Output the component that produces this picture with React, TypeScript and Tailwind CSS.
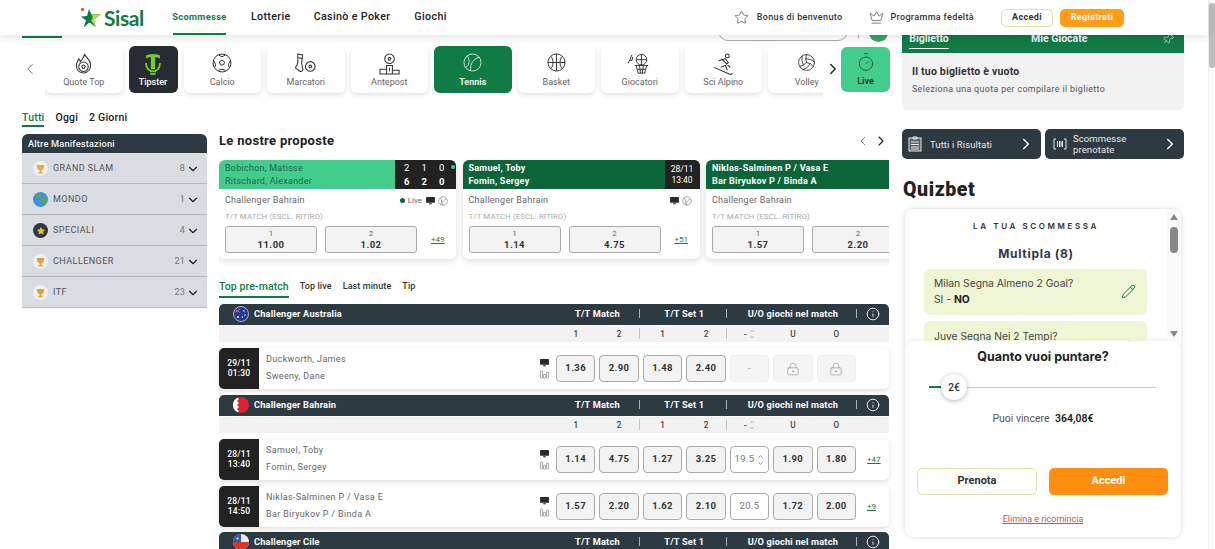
import { ChevronDown, ChevronLeft, ChevronRight, ChevronUp, Crown, Info, LockKeyhole, Pencil, Pin, Star, Timer, Volleyball } from "lucide-react";

const ink = "#333";

function Ball({ size = 20 }: { size?: number }) {
  return (
    <svg width={size} height={size} viewBox="0 0 20 20" fill="none" stroke={ink} strokeWidth="1">
      <circle cx="10" cy="10" r="9" />
      <path d="M10 7l2.600 1.900-1 3H8.400l-1-3z" />
      <path d="M6.500 2l3.500 1.800L13.500 2M1.800 8l1.800 3.400-.6 2.800M18.200 8l-1.800 3.400.6 2.800M6.500 17.300l3.500-1 3.500 1" />
    </svg>
  );
}

function QuoteIcon() {
  return (
    <svg width="19" height="21" viewBox="0 0 20 22" fill="none" stroke={ink} strokeWidth="1.100">
      <path d="M11 1c1 3 6 6 6.500 11 .4 5-3 9-7.500 9s-8-3.500-7.500-8.500C3 9 4.500 8 5 6c1 1 1.500 2 1.500 3C8.500 7 11 4.500 11 1z" />
      <circle cx="10" cy="14.500" r="5" />
      <path d="M10 12.500l1.800 1.300-.7 2.100H8.900l-.7-2.100z" />
    </svg>
  );
}

function TipsterIcon() {
  return (
    <svg width="16" height="22" viewBox="0 0 15 20" fill="none">
      <path d="M1 2c2-1.500 11-1.500 13 0v3c-1-1-3-1.300-4.500-1.300V15H5.500V3.700C4 3.700 2 4 1 5z" fill="#78cc2a" />
      <path d="M1 9c0 4.500 2.500 8 6.500 8s6.500-3.500 6.500-8M5 18.800c1.500 .8 3.500 .8 5 0" stroke="#78cc2a" strokeWidth="1.700" />
    </svg>
  );
}

function BootIcon() {
  return (
    <svg width="23" height="23" viewBox="0 0 24 24" fill="none" stroke={ink} strokeWidth="1.100">
      <path d="M4 1l5 1-1 9 1 5c1 2-1 4-3 3l-4-3c-1-1 0-2 1-3l1-3z" />
      <path d="M4.500 5l4 .8" />
      <circle cx="17" cy="14" r="5" />
      <path d="M17 12.500l1.500 1-.6 1.800h-1.800l-.6-1.800z" />
    </svg>
  );
}

function PodiumIcon() {
  return (
    <svg width="23" height="23" viewBox="0 0 24 24" fill="none" stroke={ink} strokeWidth="1.100">
      <circle cx="12" cy="6" r="5" />
      <path d="M12 4.500l1.500 1-.6 1.800h-1.800l-.6-1.800zM9 13h6v9H9zM2 17h7v5H2zM15 18h7v4h-7zM12 15.500v3.500" />
    </svg>
  );
}

function TennisIcon() {
  return (
    <svg width="19" height="19" viewBox="0 0 20 20" fill="none" stroke="#cfe9da" strokeWidth="1">
      <circle cx="10" cy="10" r="9" />
      <path d="M4 3.200C8 6 7 14 2 15.500M17.500 4.500C12 5 7 11 8 18.800" />
    </svg>
  );
}

function BasketIcon() {
  return (
    <svg width="19" height="19" viewBox="0 0 20 20" fill="none" stroke={ink} strokeWidth="1">
      <circle cx="10" cy="10" r="9" />
      <path d="M10 1v18M1 10h18M4 3.500c3 3 3 10 0 13M16 3.500c-3 3-3 10 0 13" />
    </svg>
  );
}

function HoopIcon() {
  return (
    <svg width="25" height="23" viewBox="0 0 26 24" fill="none" stroke={ink} strokeWidth="1">
      <circle cx="15" cy="7" r="5.500" />
      <path d="M15 1.500v11M9.500 7h11M8 13h14M9.500 13l2 8h7l2-8M11 17h8M13 13l1 8M17 13l-1 8" />
      <path d="M1 11l2-4 2-5M3 7l2 1 1-4" />
    </svg>
  );
}

function SkierIcon() {
  return (
    <svg width="21" height="23" viewBox="0 0 22 24" fill="none" stroke={ink} strokeWidth="1.100">
      <circle cx="15" cy="3" r="2" />
      <path d="M6 8l7-2 3 4-3 3 2 5M13 13l-5 2M9 6l9 9M1 15l16 7c2 .8 3 0 3-1" />
    </svg>
  );
}

function TvIcon() {
  return (
    <svg width="9" height="8" viewBox="0 0 10 9" fill="#2a2a2a" className="shrink-0">
      <rect x="0" y="0" width="10" height="6.500" rx="0.600" />
      <rect x="3.500" y="7" width="3" height="1.200" />
    </svg>
  );
}

function StatsIcon() {
  return (
    <svg width="9" height="9" viewBox="0 0 10 10" fill="none" stroke="#777" strokeWidth="0.700" className="shrink-0">
      <rect x="0.500" y="1" width="2.400" height="8" rx="0.600" />
      <rect x="3.800" y="5" width="2.400" height="4" rx="0.600" />
      <rect x="7.100" y="2.500" width="2.400" height="6.500" rx="0.600" />
    </svg>
  );
}

function MiniBall() {
  return (
    <svg width="10" height="10" viewBox="0 0 10 10" fill="none" stroke="#777" strokeWidth="0.600">
      <circle cx="5" cy="5" r="4.300" />
      <path d="M2 2c2 2 2 4 1 6.500M8.500 3C6 3.500 4 6 4.500 9.200" />
    </svg>
  );
}

function TrophyBadge({ color }: { color: string }) {
  return (
    <span className="flex h-[15px] w-[15px] items-center justify-center rounded-full bg-[#eef0f2]">
      <svg width="9" height="10" viewBox="0 0 10 11" fill={color}>
        <path d="M1 1h8v1.500C9 5 7.500 6.500 6 7v2h1.500v1.500h-5V9H4V7C2.500 6.500 1 5 1 2.500z" />
      </svg>
    </span>
  );
}

function GlobeBadge() {
  return (
    <svg width="15" height="15" viewBox="0 0 16 16">
      <circle cx="8" cy="8" r="8" fill="#3d94d6" />
      <path d="M4 2c2-1 4 0 5 1L7 6 4 7 2 5zM9 7l5-1 1 3-3 5-2-2z" fill="#58a65c" />
    </svg>
  );
}

function StarBadge() {
  return (
    <span className="flex h-[15px] w-[15px] items-center justify-center rounded-full bg-[#2d3a42]">
      <Star size={8} fill="#f2c21b" stroke="#f2c21b" />
    </span>
  );
}

function AustraliaFlag() {
  return (
    <svg width="16" height="16" viewBox="0 0 16 16">
      <circle cx="8" cy="8" r="7.500" fill="#27398f" stroke="#fff" strokeWidth="0.600" />
      <path d="M2 3.500l5 3M7 3l-5 3.500" stroke="#e05a6a" strokeWidth="1" />
      <circle cx="11" cy="5" r="0.700" fill="#fff" />
      <circle cx="12" cy="9" r="0.700" fill="#fff" />
      <circle cx="9.500" cy="11" r="0.700" fill="#fff" />
      <circle cx="5" cy="11" r="1" fill="#fff" />
    </svg>
  );
}

function BahrainFlag() {
  return (
    <svg width="16" height="16" viewBox="0 0 16 16">
      <circle cx="8" cy="8" r="8" fill="#d9262e" />
      <path d="M4.500.8A8 8 0 0 0 4.500 15.200L6 14l-2-2 2-2-2-2 2-2-2-2 2-2z" fill="#fff" />
    </svg>
  );
}

function ChileFlag() {
  return (
    <svg width="16" height="16" viewBox="0 0 16 16">
      <circle cx="8" cy="8" r="8" fill="#e9edf2" />
      <path d="M0 8h16a8 8 0 0 1-16 0z" fill="#d9372c" />
      <path d="M8 0v8H0a8 8 0 0 1 8-8z" fill="#2f55a4" />
      <circle cx="4.500" cy="4.500" r="1.100" fill="#fff" />
    </svg>
  );
}

function Logo() {
  return (
    <div className="flex items-center">
      <svg width="22" height="22" viewBox="0 0 22 22">
        <path d="M9 2l2.500 5.500 9.500-.5-7 5.500 1.500 7.500-6-4.500-6 5 2.500-7L1 9.500l6-.5z" fill="#0f7b45" />
        <path d="M11.500 7.500L21 7l-7 5.500 1.500 7.500-4.500-6.500 2-3z" fill="#b7d84b" />
        <circle cx="2.500" cy="2.500" r="1.600" fill="#e0352b" />
      </svg>
      <span className="ml-[2px] text-[21px] leading-none font-bold tracking-[-0.4px] text-[#0f7b45] [font-family:Lato,sans-serif]">Sisal</span>
    </div>
  );
}

function Header() {
  return (
    <header className="relative z-20 flex h-[35px] items-center bg-white pl-[80px] shadow-[0_2px_8px_rgba(0,0,0,0.12)]">
      <Logo />
      <nav className="ml-[29px] flex h-full items-center text-[10.700px] font-medium tracking-[0.35px] text-[#222]">
        <span className="flex h-full w-[53px] items-center justify-center border-b-2 border-[#0f7b45] text-[9.200px] font-bold tracking-[0.4px] text-[#0f7b45]">Scommesse</span>
        <span className="ml-[25px]">Lotterie</span>
        <span className="ml-[23px]">Casinò e Poker</span>
        <span className="ml-[24px]">Giochi</span>
      </nav>
      <div className="ml-auto flex items-center pr-[84px] text-[9px] font-medium tracking-[0.35px] text-[#333]">
        <Star size={15} strokeWidth={1} />
        <span className="ml-[8px]">Bonus di benvenuto</span>
        <Crown size={15} strokeWidth={1} className="ml-[27px]" />
        <span className="ml-[6px]">Programma fedeltà</span>
        <span className="ml-[27px] flex h-[18px] w-[52px] items-center justify-center rounded-[5px] border border-[#dfe3a8] font-bold text-[#333]">Accedi</span>
        <span className="ml-[7px] flex h-[18px] w-[64px] items-center justify-center rounded-[5px] bg-[#ff9d1b] font-bold text-white">Registrati</span>
      </div>
    </header>
  );
}

type Tile = { label: string; icon: React.ReactNode; tone?: "dark" | "green" };

const tiles: Tile[] = [
  { label: "Quote Top", icon: <QuoteIcon /> },
  { label: "Tipster", icon: <TipsterIcon />, tone: "dark" },
  { label: "Calcio", icon: <Ball /> },
  { label: "Marcatori", icon: <BootIcon /> },
  { label: "Antepost", icon: <PodiumIcon /> },
  { label: "Tennis", icon: <TennisIcon />, tone: "green" },
  { label: "Basket", icon: <BasketIcon /> },
  { label: "Giocatori", icon: <HoopIcon /> },
  { label: "Sci Alpino", icon: <SkierIcon /> },
  { label: "Volley", icon: <Volleyball size={19} strokeWidth={1.100} color={ink} /> },
];

function TileBox({ tile }: { tile: Tile }) {
  const base = "flex h-[47px] shrink-0 flex-col items-center justify-between rounded-[6px] pt-[7px] pb-[5px] text-[9px] leading-[11px]";
  if (tile.tone === "dark") {
    return (
      <div className={`${base} w-[49px] bg-[#262c31] pt-[6px] font-medium text-white`}>
        {tile.icon}
        <span>{tile.label}</span>
      </div>
    );
  }
  if (tile.tone === "green") {
    return (
      <div className={`${base} w-[77.500px] bg-[#0f7b45] font-bold text-[#e6f3ec]`}>
        {tile.icon}
        <span>{tile.label}</span>
      </div>
    );
  }
  return (
    <div className={`${base} w-[77.500px] bg-white pt-[6px] text-[#666] shadow-[0_2px_5px_rgba(0,0,0,0.12)]`}>
      {tile.icon}
      <span>{tile.label}</span>
    </div>
  );
}

function CategoryStrip() {
  return (
    <div className="flex h-[58px] items-start pl-[21px]">
      <ChevronLeft size={18} strokeWidth={1.200} color="#666" className="mt-[14px] mr-[6px] shrink-0" />
      <div className="flex h-[58px] w-[778px] shrink-0 gap-[6px] overflow-hidden">
        {tiles.map((t) => (
          <TileBox key={t.label} tile={t} />
        ))}
      </div>
      <ChevronRight size={18} strokeWidth={1.800} color="#222" className="mt-[14px] ml-[1px] shrink-0" />
      <div className="mt-[1px] -ml-[1px] flex h-[45px] w-[49px] shrink-0 flex-col items-center justify-between rounded-[6px] bg-[#43cd8d] pt-[5px] pb-[5px] text-[9px] leading-[11px] font-bold text-[#1f3b2f]">
        <Timer size={20} strokeWidth={1} color="#23493a" />
        <span>Live</span>
      </div>
    </div>
  );
}

const leagues = [
  { name: "GRAND SLAM", count: 8, icon: <TrophyBadge color="#eda93a" /> },
  { name: "MONDO", count: 1, icon: <GlobeBadge /> },
  { name: "SPECIALI", count: 4, icon: <StarBadge /> },
  { name: "CHALLENGER", count: 21, icon: <TrophyBadge color="#e3a13d" /> },
  { name: "ITF", count: 23, icon: <TrophyBadge color="#e3a13d" /> },
];

function Sidebar() {
  return (
    <aside className="w-[185px] shrink-0 pt-[1px]">
      <div className="flex h-[24px] items-start gap-[11px] text-[10.500px] leading-[15px] font-medium tracking-[0.2px] text-[#222]">
        <span className="h-[17px] border-b-2 border-[#0f7b45] text-[#0f7b45]">Tutti</span>
        <span>Oggi</span>
        <span>2 Giorni</span>
      </div>
      <div className="flex h-[19px] items-center rounded-t-[6px] bg-[#2d3a42] pl-[6px] text-[9.200px] font-medium tracking-[0.2px] text-[#f1f1f1]">Altre Manifestazioni</div>
      {leagues.map((l) => (
        <div key={l.name} className="flex h-[31px] items-center border-b border-[#b4b8be] bg-[#d9dce1] pt-[1px] pr-[7px] pl-[11px] text-[9px] tracking-[0.45px] text-[#555]">
          <span className="flex w-[15px] justify-center">{l.icon}</span>
          <span className="ml-[5px]">{l.name}</span>
          <span className="ml-auto tracking-[0.2px] text-[#777]">{l.count}</span>
          <ChevronDown size={14} strokeWidth={2} color="#222" className="ml-[1px]" />
        </div>
      ))}
    </aside>
  );
}

type Featured = {
  one: string;
  two: string;
  odds: [string, string];
  more?: string;
  live?: boolean;
  time?: [string, string];
};

const featured: Featured[] = [
  { one: "Bobichon, Matisse", two: "Ritschard, Alexander", odds: ["11.00", "1.02"], more: "+49", live: true },
  { one: "Samuel, Toby", two: "Fomin, Sergey", odds: ["1.14", "4.75"], more: "+51", time: ["28/11", "13:40"] },
  { one: "Niklas-Salminen P / Vasa E", two: "Bar Biryukov P / Binda A", odds: ["1.57", "2.20"] },
];

function FeaturedCard({ card }: { card: Featured }) {
  return (
    <div className="h-[99px] w-[237px] shrink-0 overflow-hidden rounded-[6px] bg-white shadow-[0_2px_6px_rgba(0,0,0,0.14)]">
      <div className={`flex h-[29px] ${card.live ? "bg-[#43cd8d] text-[#23634a]" : "bg-[#0a6538] font-bold text-white"}`}>
        <div className="flex flex-1 flex-col justify-center pl-[6px] text-[9px] leading-[13px] tracking-[0.25px]">
          <span>{card.one}</span>
          <span>{card.two}</span>
        </div>
        {card.live && (
          <div className="grid w-[61px] grid-cols-[17.500px_17.500px_17.500px_1fr] items-center bg-[#222] pl-[3px] text-center text-[9.500px] leading-[13px] font-bold text-white">
            <span className="font-normal">2</span>
            <span className="font-normal">1</span>
            <span className="font-normal">0</span>
            <span className="h-[4px] w-[4px] rounded-full bg-[#43cd8d]" />
            <span>6</span>
            <span>2</span>
            <span>0</span>
          </div>
        )}
        {card.time && (
          <div className="flex w-[35px] flex-col items-center justify-center bg-[#222] text-[8.500px] leading-[11px] font-normal text-white">
            <span>{card.time[0]}</span>
            <span>{card.time[1]}</span>
          </div>
        )}
      </div>
      <div className="flex h-[23px] items-center justify-between pr-[8px] pl-[6px] text-[9px] tracking-[0.25px] text-[#666]">
        <span>Challenger Bahrain</span>
        <span className="flex items-center gap-[3px] text-[8px] tracking-normal">
          {card.live && (
            <>
              <span className="h-[4.500px] w-[4.500px] rounded-full bg-[#0a6538]" />
              <span className="mr-[1px]">Live</span>
            </>
          )}
          {!card.one.startsWith("Niklas") && (
            <>
              <TvIcon />
              <MiniBall />
            </>
          )}
        </span>
      </div>
      <div className="pl-[6px] text-[7.900px] leading-[10px] tracking-[0.1px] text-[#aaa]">T/T MATCH (ESCL. RITIRO)</div>
      <div className="mt-[4px] flex items-center pl-[6px]">
        {card.odds.map((o, i) => (
          <div key={o} className={`flex h-[27px] w-[92px] shrink-0 flex-col items-center justify-center rounded-[3px] border border-[#aaa] bg-[#f3f3f3] ${i === 1 ? "ml-[8px]" : ""}`}>
            <span className="text-[8px] leading-[11px] text-[#666]">{i + 1}</span>
            <span className="text-[9.500px] leading-[12px] font-bold tracking-[0.5px] text-[#333]">{o}</span>
          </div>
        ))}
        {card.more && <span className="ml-[14px] text-[8px] text-[#0f7b45] underline">{card.more}</span>}
      </div>
    </div>
  );
}

function Proposals() {
  return (
    <section>
      <div className="flex h-[29px] items-start justify-between">
        <h2 className="text-[13px] leading-[20px] font-bold tracking-[0.3px] text-[#222]">Le nostre proposte</h2>
        <div className="flex gap-[2px]">
          <ChevronLeft size={16} strokeWidth={1.200} color="#666" className="mt-[2px]" />
          <ChevronRight size={16} strokeWidth={1.700} color="#222" className="mt-[2px]" />
        </div>
      </div>
      <div className="flex h-[119px] gap-[6.500px] overflow-hidden">
        {featured.map((c) => (
          <FeaturedCard key={c.one} card={c} />
        ))}
      </div>
    </section>
  );
}

function GroupHeader({ name, flag, sub = true }: { name: string; flag: React.ReactNode; sub?: boolean }) {
  return (
    <>
      <div className="flex h-[21px] shrink-0 items-center rounded-t-[5px] bg-[#2d3a42] pb-[1px] pl-[14px] text-[9.200px] font-bold tracking-[0.2px] text-white">
        <span className="flex w-[16px] justify-center">{flag}</span>
        <span className="ml-[5px] w-[302px]">{name}</span>
        <div className="grid w-[300px] grid-cols-7 gap-[4px]">
          <div className="col-span-2 flex items-center">
            <span className="flex-1 text-center">T/T Match</span>
            <span className="-mr-[1px] h-[9px] w-px bg-[#aab2b7]" />
          </div>
          <div className="col-span-2 flex items-center">
            <span className="flex-1 text-center">T/T Set 1</span>
            <span className="-mr-[1px] h-[9px] w-px bg-[#aab2b7]" />
          </div>
          <div className="col-span-3 flex items-center">
            <span className="flex-1 text-center">U/O giochi nel match</span>
            <span className="-mr-[1px] h-[9px] w-px bg-[#aab2b7]" />
          </div>
        </div>
        <Info size={14} strokeWidth={1.500} className="ml-[10px]" />
      </div>
      {sub && (
        <div className="mt-px flex h-[16px] shrink-0 items-center bg-[#f2f2f2] pl-[337px] text-[8.200px] font-medium text-[#444]">
          <div className="grid w-[300px] grid-cols-7 gap-[4px] text-center">
            <span>1</span>
            <div className="flex items-center">
              <span className="flex-1">2</span>
              <span className="-mr-[1px] h-[11px] w-px bg-[#c4c4c4]" />
            </div>
            <span>1</span>
            <div className="flex items-center">
              <span className="flex-1">2</span>
              <span className="-mr-[1px] h-[11px] w-px bg-[#c4c4c4]" />
            </div>
            <div className="flex items-center justify-center gap-[2px]">
              <span>-</span>
              <span className="flex flex-col items-center">
                <ChevronUp size={6} strokeWidth={1.500} />
                <ChevronDown size={6} strokeWidth={1.500} />
              </span>
            </div>
            <span>U</span>
            <span>O</span>
          </div>
        </div>
      )}
    </>
  );
}

type Match = {
  date: string;
  time: string;
  one: string;
  two: string;
  odds: string[];
  line: string;
  spin?: boolean;
  locked?: boolean;
  more?: string;
};

function OddBox({ value, off }: { value: string; off?: boolean }) {
  return (
    <span className={`flex h-[27px] items-center justify-center rounded-[4px] border text-[9.500px] font-bold tracking-[0.4px] ${off ? "border-[#eee] bg-[#f5f5f5] text-[#bbb]" : "border-[#aaa] bg-[#f3f3f3] text-[#333]"}`}>
      {value}
    </span>
  );
}

function MatchRow({ m }: { m: Match }) {
  return (
    <div className="flex h-[41px] shrink-0 rounded-[5px] bg-white shadow-[0_2px_5px_rgba(0,0,0,0.13)]">
      <div className="flex w-[40px] flex-col items-center justify-center rounded-l-[5px] bg-[#222] pb-[2px] text-[8.500px] leading-[10px] font-medium tracking-[0.2px] text-white">
        <span>{m.date}</span>
        <span>{m.time}</span>
      </div>
      <div className="flex w-[273px] flex-col justify-center gap-[6px] pb-[2px] pl-[7px] text-[9px] leading-[11px] tracking-[0.35px] text-[#666]">
        <span>{m.one}</span>
        <span>{m.two}</span>
      </div>
      <div className="flex w-[24px] flex-col items-center justify-center gap-[3px]">
        <TvIcon />
        <StatsIcon />
      </div>
      <div className="grid w-[300px] grid-cols-7 items-center gap-[4px]">
        {m.odds.slice(0, 4).map((o, i) => (
          <OddBox key={i} value={o} />
        ))}
        {m.locked ? (
          <>
            <OddBox value="-" off />
            <span className="flex h-[27px] items-center justify-center rounded-[4px] border border-[#eee] bg-[#f5f5f5]">
              <LockKeyhole size={14} strokeWidth={1} color="#888" />
            </span>
            <span className="flex h-[27px] items-center justify-center rounded-[4px] border border-[#eee] bg-[#f5f5f5]">
              <LockKeyhole size={14} strokeWidth={1} color="#888" />
            </span>
          </>
        ) : (
          <>
            <span className="flex h-[27px] items-center justify-center gap-[3px] rounded-[4px] border border-[#aaa] bg-white text-[9.500px] tracking-[0.3px] text-[#777]">
              {m.line}
              {m.spin && (
                <span className="flex flex-col items-center">
                  <ChevronUp size={7} strokeWidth={1.800} color="#333" />
                  <ChevronDown size={7} strokeWidth={1.800} color="#333" />
                </span>
              )}
            </span>
            <OddBox value={m.odds[4]} />
            <OddBox value={m.odds[5]} />
          </>
        )}
      </div>
      {m.more && <span className="ml-[11px] self-center text-[8px] text-[#0f7b45] underline">{m.more}</span>}
    </div>
  );
}

function Listing() {
  return (
    <section className="flex flex-col">
      <div className="flex h-[20px] shrink-0 items-start gap-[11px] text-[9px] leading-[15px] font-medium tracking-[0.1px] text-[#333]">
        <span className="h-[19px] border-b-2 border-[#0f7b45] text-[10.500px] leading-[15px] tracking-[0.1px] text-[#0f7b45]">Top pre-match</span>
        <span>Top live</span>
        <span>Last minute</span>
        <span>Tip</span>
      </div>
      <div className="mt-[5px]">
        <GroupHeader name="Challenger Australia" flag={<AustraliaFlag />} />
      </div>
      <div className="mt-[6px]">
        <MatchRow m={{ date: "29/11", time: "01:30", one: "Duckworth, James", two: "Sweeny, Dane", odds: ["1.36", "2.90", "1.48", "2.40"], line: "-", locked: true }} />
      </div>
      <div className="mt-[6px]">
        <GroupHeader name="Challenger Bahrain" flag={<BahrainFlag />} />
      </div>
      <div className="mt-[6px]">
        <MatchRow m={{ date: "28/11", time: "13:40", one: "Samuel, Toby", two: "Fomin, Sergey", odds: ["1.14", "4.75", "1.27", "3.25", "1.90", "1.80"], line: "19.5", spin: true, more: "+47" }} />
      </div>
      <div className="mt-[6px]">
        <MatchRow m={{ date: "28/11", time: "14:50", one: "Niklas-Salminen P / Vasa E", two: "Bar Biryukov P / Binda A", odds: ["1.57", "2.20", "1.62", "2.10", "1.72", "2.00"], line: "20.5", more: "+9" }} />
      </div>
      <div className="mt-[5px]">
        <GroupHeader name="Challenger Cile" flag={<ChileFlag />} sub={false} />
      </div>
    </section>
  );
}

function Ticket() {
  return (
    <div>
      <div className="flex h-[18px] items-start bg-[#0f7b45] text-[10.500px] font-bold text-[#eef7f1]">
        <span className="ml-[7px] h-[14px] w-[40px] border-b border-white text-center leading-[7px]">Biglietto</span>
        <span className="ml-[82px] leading-[7px]">Mie Giocate</span>
        <Pin size={12} strokeWidth={1.200} className="mt-[-2px] mr-[10px] ml-auto rotate-45 text-white" />
      </div>
      <div className="h-[57px] rounded-b-[6px] bg-[#f2f2f2] pt-[12px] pl-[10px]">
        <p className="text-[10.500px] leading-[14px] font-bold tracking-[0.2px] text-[#333]">Il tuo biglietto è vuoto</p>
        <p className="mt-[5px] text-[8.900px] leading-[11px] tracking-[0.35px] text-[#555]">Seleziona una quota per compilare il biglietto</p>
      </div>
    </div>
  );
}

function QuickLinks() {
  return (
    <div className="mt-[19px] flex gap-[4px] text-[9.500px] leading-[11px] tracking-[0.1px] text-[#e8e8e8]">
      <div className="flex h-[30px] w-[139px] items-center rounded-[5px] bg-[#2d3a42] pr-[6px] pl-[6px]">
        <svg width="14" height="16" viewBox="0 0 14 16" fill="none" stroke="#e8e8e8" strokeWidth="1">
          <rect x="1" y="2" width="12" height="13" fill="#555f66" />
          <path d="M5 1h4v2H5zM3 6h8M3 8.500h8M3 11h8M3 13h8" />
        </svg>
        <span className="ml-[8px]">Tutti i Risultati</span>
        <ChevronRight size={18} strokeWidth={2} color="#fff" className="ml-auto" />
      </div>
      <div className="flex h-[30px] w-[139px] items-center rounded-[5px] bg-[#2d3a42] pr-[5px] pl-[8px]">
        <svg width="14" height="12" viewBox="0 0 14 12" fill="none" stroke="#e8e8e8" strokeWidth="1">
          <path d="M3 1H1v10h2M11 1h2v10h-2M4.500 3v6M6.500 3v6M8 3v6M9.500 3v6" />
        </svg>
        <span className="ml-[6px]">
          Scommesse
          <br />
          prenotate
        </span>
        <ChevronRight size={18} strokeWidth={2} color="#fff" className="ml-auto" />
      </div>
    </div>
  );
}

function Quizbet() {
  return (
    <section className="mt-[16px]">
      <h2 className="ml-[1px] h-[34px] text-[19.500px] leading-[30px] font-black tracking-[0.6px] text-[#222]">Quizbet</h2>
      <div className="ml-[3px] h-[328px] w-[276px] overflow-hidden rounded-[8px] bg-white shadow-[0_0_5px_rgba(0,0,0,0.16)]">
        <div className="flex h-[132px] overflow-hidden">
          <div className="w-[262px] shrink-0 pt-[11px] text-center [font-family:Inter,sans-serif]">
            <p className="text-[8px] leading-[12px] font-semibold tracking-[2.600px] text-[#333]">LA TUA SCOMMESSA</p>
            <p className="mt-[14px] text-[12px] leading-[16px] font-bold tracking-[0.7px] text-[#2d3a42]">Multipla (8)</p>
            <div className="mt-[7px] ml-[19px] flex h-[46px] w-[223px] items-center justify-between rounded-[6px] bg-[#eff6d5] pr-[11px] pb-[2px] pl-[10px] text-left text-[10.300px] leading-[16px] text-[#444]">
              <div>
                <p>Milan Segna Almeno 2 Goal?</p>
                <p>
                  SI - <b className="text-[#222]">NO</b>
                </p>
              </div>
              <Pencil size={15} strokeWidth={1.400} color="#0a6538" />
            </div>
            <div className="mt-[6px] ml-[19px] flex h-[46px] w-[223px] justify-between rounded-[6px] bg-[#eff6d5] pt-[7px] pr-[12px] pl-[10px] text-left text-[10.300px] leading-[16px] text-[#444]">
              <p>Juve Segna Nei 2 Tempi?</p>
              <ChevronUp size={13} strokeWidth={1.400} color="#0a6538" className="mt-[8px]" />
            </div>
          </div>
          <div className="flex w-[14px] flex-col items-center bg-[#fafafa] pt-[5px]">
            <span className="h-0 w-0 border-x-[4.500px] border-b-[6px] border-x-transparent border-b-[#888]" />
            <span className="mt-[7px] h-[26px] w-[8px] rounded-full bg-[#888]" />
            <span className="mt-[78px] h-0 w-0 border-x-[4.500px] border-t-[6px] border-x-transparent border-t-[#888]" />
          </div>
        </div>
        <div className="h-[196px] rounded-t-[10px] bg-white pt-[8px] shadow-[0_-2px_5px_rgba(0,0,0,0.06)]">
          <p className="text-center text-[12.500px] leading-[16px] font-bold text-[#222] [font-family:Inter,sans-serif]">Quanto vuoi puntare?</p>
          <div className="relative mt-[9px] ml-[24px] flex h-[26px] w-[227px] items-center">
            <span className="h-[1.500px] w-[12px] bg-[#0f7b45]" />
            <span className="h-px flex-1 bg-[#ccc]" />
            <span className="absolute top-0 left-[12px] flex h-[26px] w-[26px] items-center justify-center rounded-full bg-white text-[10px] font-medium text-[#333] shadow-[0_1px_4px_rgba(0,0,0,0.3)]">2€</span>
          </div>
          <p className="mt-[11px] text-center text-[10.500px] leading-[16px] text-[#555]">
            Puoi vincere <b className="ml-[3px] font-semibold text-[#222]">364,08€</b>
          </p>
          <div className="mt-[41px] ml-[12px] flex gap-[12px] text-[11px] font-bold">
            <span className="flex h-[27px] w-[120px] items-center justify-center rounded-[5px] border border-[#dfe3a8] bg-white text-[#333]">Prenota</span>
            <span className="flex h-[27px] w-[119px] items-center justify-center rounded-[5px] bg-[#ff8d10] text-white">Accedi</span>
          </div>
          <p className="mt-[18px] text-center text-[9px] leading-[12px] text-[#b85a5a] underline">Elimina e ricomincia</p>
        </div>
      </div>
    </section>
  );
}

export default function App() {
  return (
    <div className="flex h-[549px] w-[1215px] overflow-hidden bg-white text-[#222] [font-family:Roboto,'Liberation_Sans',sans-serif]">
      <div className="w-[1208px] shrink-0">
        <Header />
        <div className="flex">
          <div className="w-[902px] shrink-0">
            <div className="flex h-[11px] items-start overflow-hidden">
              <span className="mt-[1px] ml-[22px] h-[1.500px] w-[40px] bg-[#0f7b45]" />
              <span className="-mt-[14px] ml-[656px] h-[20px] w-[130px] rounded-full border border-[#aaa]" />
              <span className="ml-[10px] h-[3px] w-px bg-[#aaa]" />
              <span className="-mt-[12px] ml-[10px] h-[19px] w-[19px] rounded-full bg-[#3ea06a]" />
            </div>
            <CategoryStrip />
            <div className="flex gap-[12px] pt-[5px] pl-[22px]">
              <Sidebar />
              <div className="mt-[22px] w-[670px] shrink-0">
                <Proposals />
                <Listing />
              </div>
            </div>
          </div>
          <div className="w-[282px] shrink-0">
            <Ticket />
            <QuickLinks />
            <Quizbet />
          </div>
        </div>
      </div>
      <div className="w-[7px] shrink-0 border-l border-[#eee] bg-[#fbfbfb]">
        <div className="mt-[3px] h-[65px] rounded-full bg-[#bdbdbd]" />
      </div>
    </div>
  );
}
